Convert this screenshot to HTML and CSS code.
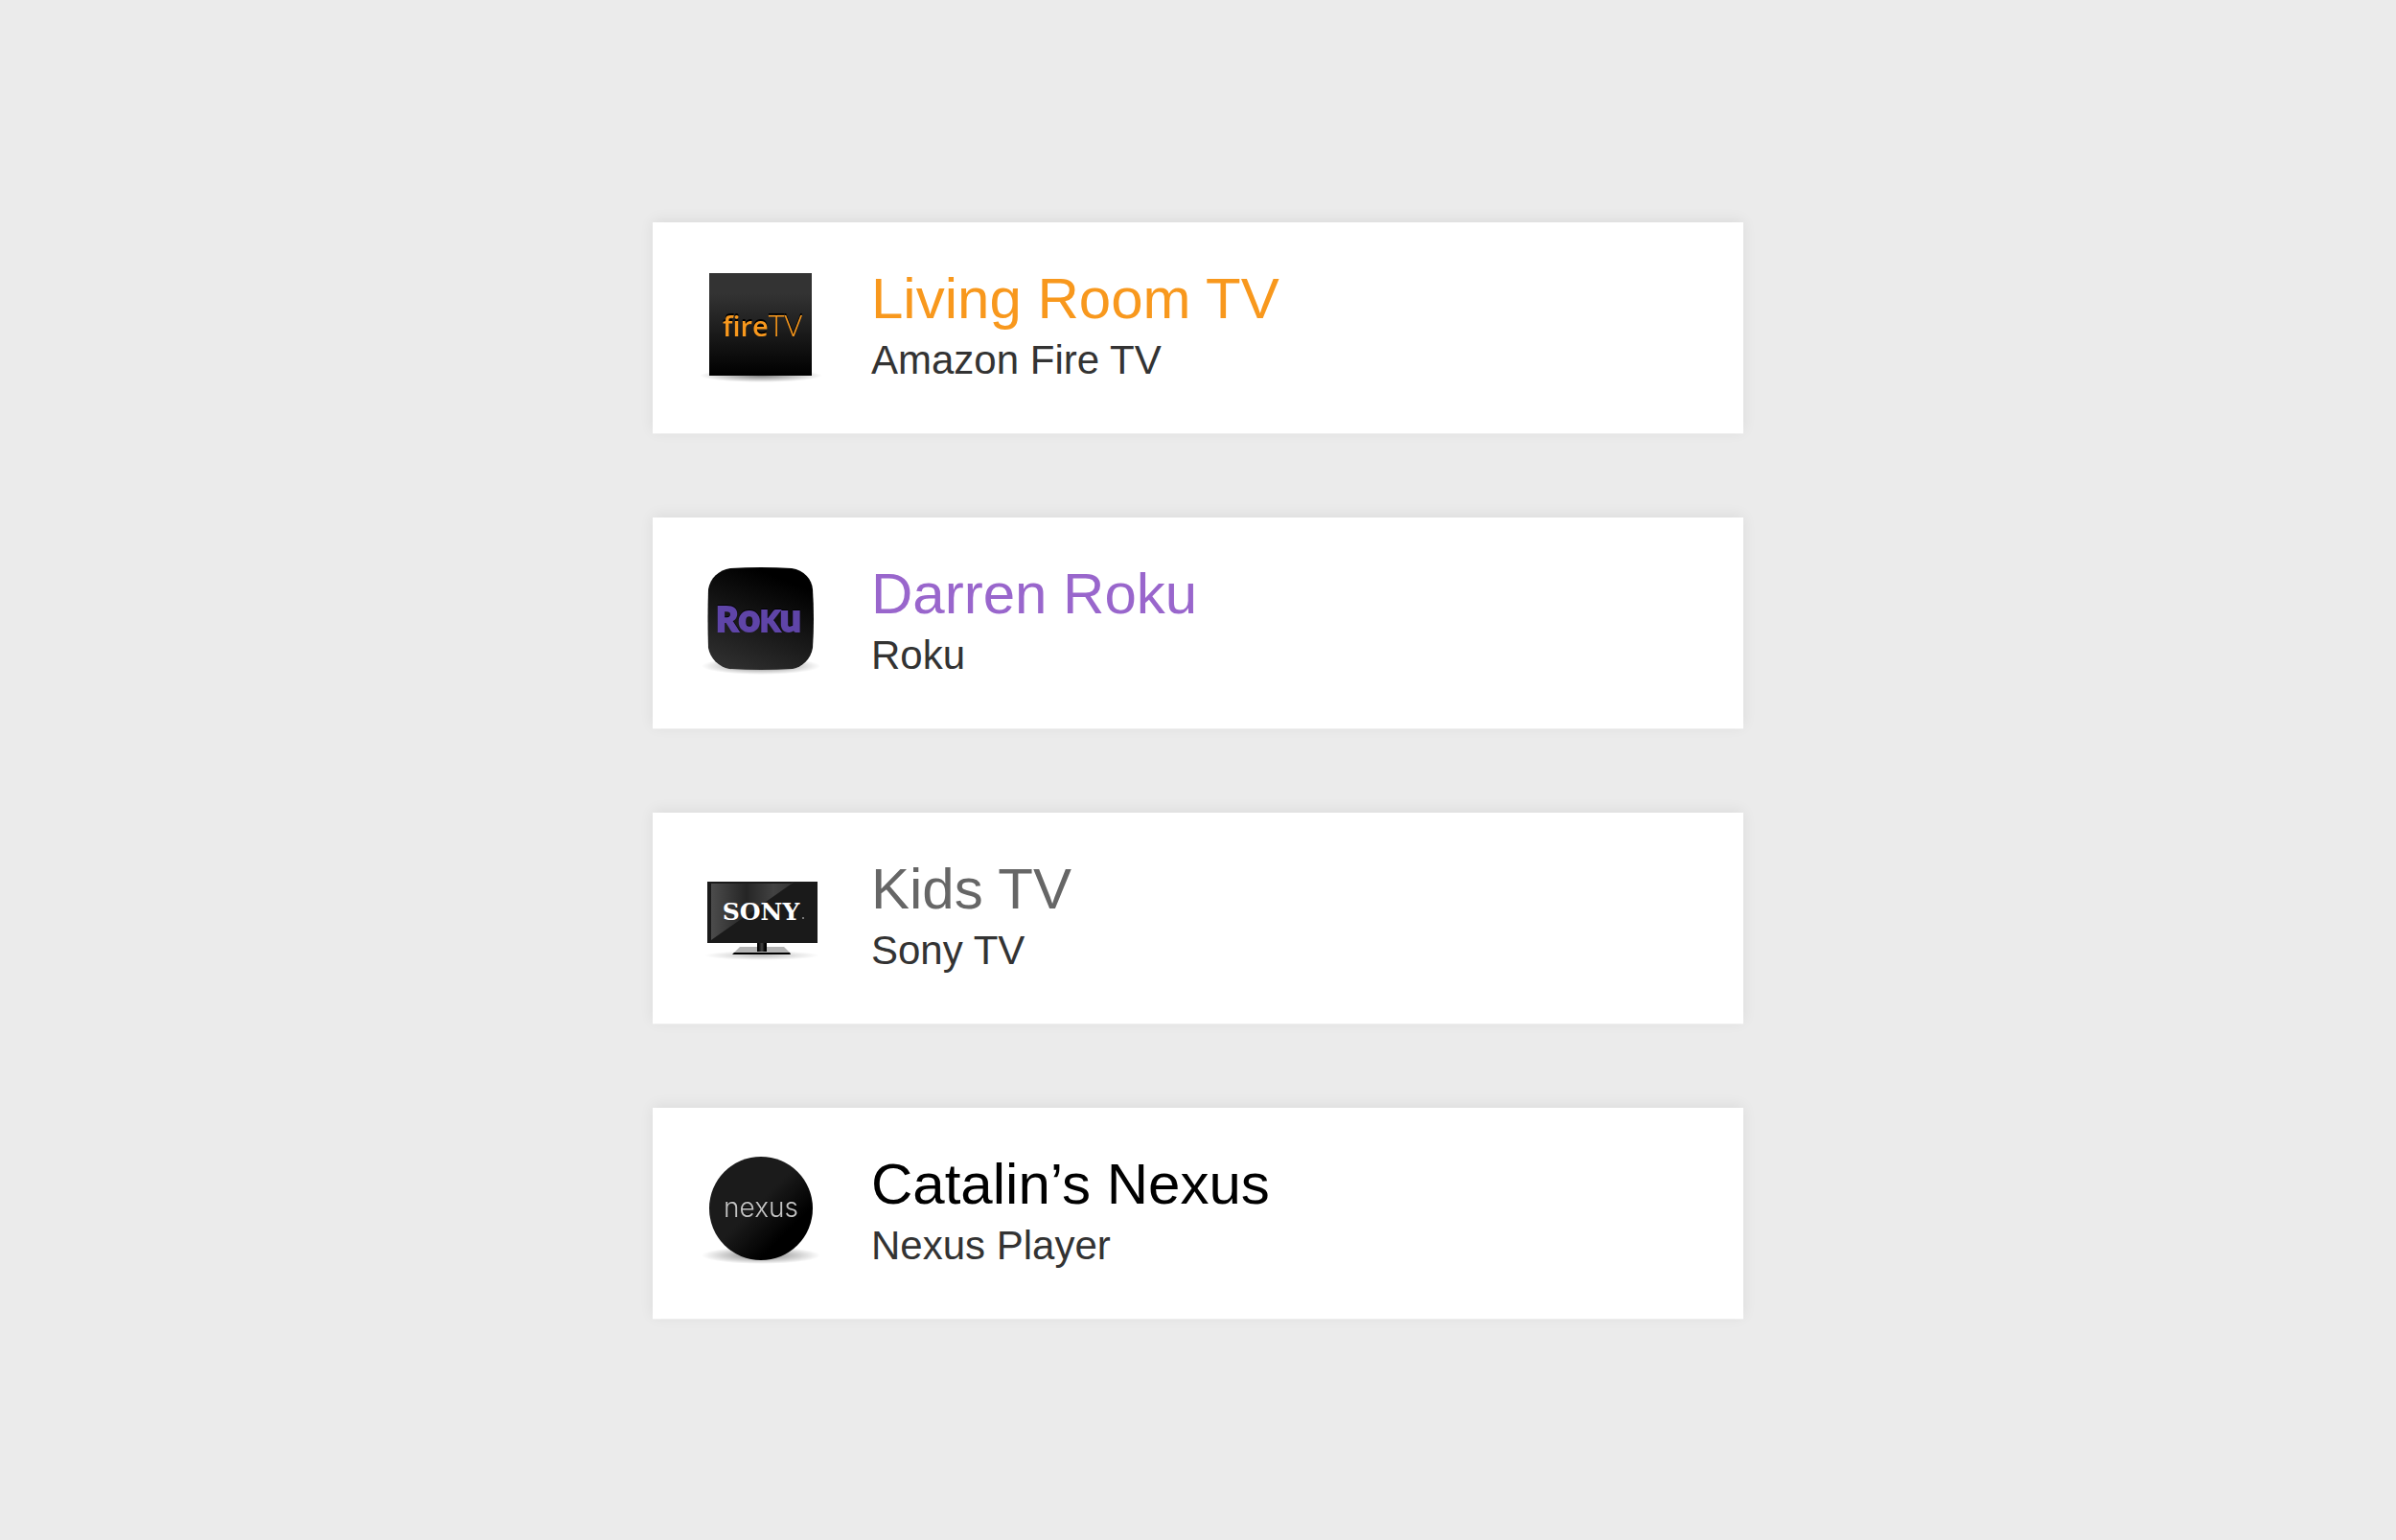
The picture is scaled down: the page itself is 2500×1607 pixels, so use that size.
FILE: index.html
```html
<!DOCTYPE html>
<html lang="en">
<head>
  <meta charset="utf-8">
  <meta name="viewport" content="width=device-width, initial-scale=1">
  <title>Devices</title>
  <link rel="stylesheet" href="styles.css">
</head>
<body>
  <main class="page">
    <ul class="devices">
      <li class="device device--fire">
        <svg class="device__icon" viewBox="0 0 132 132" aria-hidden="true">
          <defs>
            <radialGradient id="floor">
              <stop offset="0" stop-color="#000" stop-opacity=".5"/>
              <stop offset=".6" stop-color="#000" stop-opacity=".2"/>
              <stop offset="1" stop-color="#000" stop-opacity="0"/>
            </radialGradient>
            <linearGradient id="fire-body" x1="0" y1="0" x2="0" y2="1">
              <stop offset=".2" stop-color="#333"/>
              <stop offset="1" stop-color="#000"/>
            </linearGradient>
          </defs>
          <ellipse cx="65" cy="116" rx="64" ry="7" fill="url(#floor)"/>
          <rect x="11" y="9" width="107" height="107" fill="url(#fire-body)"/>
          <text class="fire-logo" x="25" y="75">fire<tspan class="fire-logo__tv">TV</tspan></text>
        </svg>
        <div class="device__text">
          <h2 class="device__name">Living Room TV</h2>
          <p class="device__model">Amazon Fire TV</p>
        </div>
      </li>
      <li class="device device--roku">
        <svg class="device__icon" viewBox="0 0 132 132" aria-hidden="true">
          <defs>
            <linearGradient id="roku-body" x1=".3" y1="1" x2=".7" y2="0">
              <stop offset="0" stop-color="#2e2e2e"/>
              <stop offset=".9" stop-color="#000"/>
            </linearGradient>
          </defs>
          <ellipse cx="65" cy="111" rx="62" ry="9" fill="url(#floor)"/>
          <path d="M33 9Q65 7 97 9C110 11 118 20 119 31Q121 62 119 92C117 104 108 112 98 114Q65 116 32 114C21 112 12 103 10 92Q9 62 10 31C12 19 21 11 33 9Z" fill="url(#roku-body)"/>
          <text class="roku-logo" x="18" y="75">R<tspan class="roku-logo__low">o</tspan><tspan class="roku-logo__mid">K</tspan><tspan class="roku-logo__low">u</tspan></text>
        </svg>
        <div class="device__text">
          <h2 class="device__name">Darren Roku</h2>
          <p class="device__model">Roku</p>
        </div>
      </li>
      <li class="device device--sony">
        <svg class="device__icon" viewBox="0 0 132 132" aria-hidden="true">
          <defs>
            <linearGradient id="sony-glare" x1="0" y1="0" x2="1" y2="0">
              <stop offset="0" stop-color="#4c4c4c"/>
              <stop offset=".42" stop-color="#252525"/>
              <stop offset=".75" stop-color="#424242"/>
              <stop offset="1" stop-color="#333"/>
            </linearGradient>
            <linearGradient id="sony-neck" x1="0" y1="0" x2="1" y2="0">
              <stop offset=".1" stop-color="#000"/>
              <stop offset=".5" stop-color="#444"/>
              <stop offset=".8" stop-color="#000"/>
            </linearGradient>
          </defs>
          <ellipse cx="66" cy="105" rx="60" ry="5" fill="url(#floor)" opacity=".5"/>
          <path d="M43 96H89L96 103H36Z" fill="#b5b5b5"/>
          <path d="M37 102H95L96 104H35Z" fill="#000"/>
          <rect x="61" y="92" width="10" height="9" fill="url(#sony-neck)"/>
          <rect x="9" y="28" width="115" height="64" fill="#1a1a1a"/>
          <path d="M13 30H96L100 28L13 89Z" fill="url(#sony-glare)"/>
          <text class="sony-logo" x="65" y="68">SONY</text>
          <circle cx="109" cy="66" r="1" fill="#999"/>
        </svg>
        <div class="device__text">
          <h2 class="device__name">Kids TV</h2>
          <p class="device__model">Sony TV</p>
        </div>
      </li>
      <li class="device device--nexus">
        <svg class="device__icon" viewBox="0 0 132 132" aria-hidden="true">
          <defs>
            <linearGradient id="nexus-body" x1=".1" y1=".1" x2=".9" y2=".9">
              <stop offset=".45" stop-color="#1b1b1b"/>
              <stop offset=".8" stop-color="#000"/>
            </linearGradient>
          </defs>
          <ellipse cx="65" cy="110" rx="62" ry="9" fill="url(#floor)"/>
          <circle cx="65" cy="61" r="54" fill="url(#nexus-body)"/>
          <text class="nexus-logo" x="65" y="70">nexus</text>
        </svg>
        <div class="device__text">
          <h2 class="device__name">Catalin’s Nexus</h2>
          <p class="device__model">Nexus Player</p>
        </div>
      </li>
    </ul>
  </main>
</body>
</html>
```

FILE: styles.css
```css
* {
  box-sizing: border-box;
}

body {
  margin: 0;
  background: #ebebeb;
  color: #333;
  font-family: "Liberation Sans", Arial, Helvetica, sans-serif;
}

.page {
  max-width: 1186px;
  margin: 0 auto;
  padding: 231px 24px;
}

.devices {
  display: flex;
  flex-direction: column;
  gap: 88px;
  margin: 0;
  padding: 1px 0 0;
  list-style: none;
}

.device {
  display: flex;
  align-items: flex-start;
  gap: 48px;
  padding: 44px 48px;
  background: #fff;
  box-shadow: 0 1px 0 rgba(255, 255, 255, .4), 0 -2px 14px rgba(0, 0, 0, .07);
}

.device__icon {
  flex: none;
  width: 132px;
  height: 132px;
}

.device__text {
  display: flex;
  flex-direction: column;
  gap: 4px;
}

.device__name {
  margin: 0;
  font-size: 60px;
  font-weight: 400;
  line-height: 72px;
}

.device__model {
  margin: 0;
  font-size: 42px;
  line-height: 48px;
}

.device--fire .device__name {
  color: #f8981d;
}

.device--roku .device__name {
  color: #9966cc;
}

.device--sony .device__name {
  color: #666;
}

.device--nexus .device__name {
  color: #000;
}

.fire-logo {
  fill: #f8981d;
  font-family: "Open Sans", sans-serif;
  font-size: 29px;
  font-weight: 600;
  filter: drop-shadow(0 -2px 0 #000);
}

.fire-logo__tv {
  font-size: 32px;
  font-weight: 300;
}

.roku-logo {
  fill: #5f45a8;
  stroke: #5f45a8;
  stroke-width: 2;
  font-family: Lato, sans-serif;
  font-size: 36px;
  font-weight: 900;
  filter: drop-shadow(0 -1px 0 #000);
}

.roku-logo__mid {
  font-size: 30px;
}

.roku-logo__low {
  font-size: 39px;
}

.sony-logo {
  fill: #fff;
  font-family: "DejaVu Serif", serif;
  font-size: 25px;
  font-weight: 700;
  text-anchor: middle;
}

.nexus-logo {
  fill: #c4c4c4;
  font-family: Inter, sans-serif;
  font-size: 28px;
  font-weight: 300;
  text-anchor: middle;
  filter: drop-shadow(0 -1px 0 #000);
}
```
